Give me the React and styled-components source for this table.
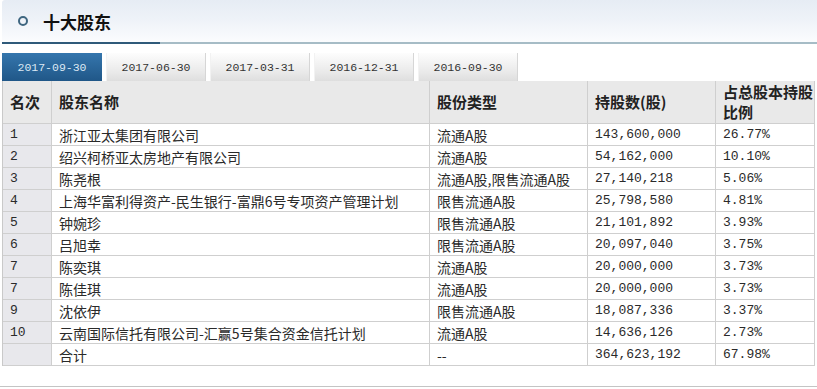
import React from 'react';
import styled, {createGlobalStyle} from 'styled-components';

const Global = createGlobalStyle`
body { margin: 0; background: #fff; font-family: "Noto Sans CJK SC", sans-serif; }
`;

const Page = styled.div`
width: 817px;
height: 389px;
padding-left: 2px;
box-sizing: border-box;
display: flex;
flex-direction: column;
overflow: hidden;
`;

const TitleBar = styled.div`
height: 42px;
display: flex;
align-items: center;
padding-left: 16px;
gap: 15px;
border-top-left-radius: 3px;
background: linear-gradient(#e6ecf4 0%, #eef2f8 45%, #fbfcfe 100%);
`;

const Ring = styled.span`
width: 6px;
height: 6px;
border: 2px solid #3f6680;
border-radius: 50%;
margin-left: 0;
`;

const Title = styled.div`
font-size: 17px;
font-weight: bold;
color: #111;
`;

const Rule = styled.div`
height: 2px;
background: linear-gradient(to right, #2f5a7a 0, #2f5a7a 158px, #a6bcc6 158px);
`;

const Tabs = styled.div`
display: flex;
gap: 4px;
margin-top: 9px;
height: 28px;
`;

const Tab = styled.div`
width: 100px;
display: flex;
align-items: center;
justify-content: center;
font-family: "Liberation Mono", monospace;
font-size: 11.5px;
color: ${p => (p.active ? '#dde9f4' : '#333')};
background: ${p => (p.active
  ? 'linear-gradient(#3576ad, #205788)'
  : 'linear-gradient(#fdfdfd, #e9e9e9 70%, #dedede)')};
box-shadow: ${p => (p.active ? 'none' : 'inset 1px 0 0 #f2f2f2, inset -1px 0 0 #d6d6d6')};
`;

const Table = styled.div`
width: 813px;
border-left: 1px solid #c9c9c9;
display: flex;
flex-direction: column;
`;

const Row = styled.div`
display: grid;
grid-template-columns: 49px 378px 158px 128px 99px;
height: ${p => (p.head ? '43px' : '22px')};
`;

const Cell = styled.div`
box-sizing: border-box;
border-right: 1px solid #cfcfcf;
border-bottom: 1px solid #cfcfcf;
padding-left: ${p => (p.first ? '7px' : '7px')};
display: flex;
align-items: center;
white-space: nowrap;
overflow: hidden;
color: #2a2a2a;
font-size: ${p => (p.mono ? '13px' : '14px')};
font-family: ${p => (p.mono ? '"Liberation Mono", "Noto Sans CJK SC", monospace' : '"Noto Sans CJK SC", sans-serif')};
background: ${p => (p.first ? '#e8e8ec' : '#fff')};
`;

const HeadCell = styled(Cell)`
background: #e9e9e9;
font-family: "Noto Sans CJK SC", sans-serif;
font-size: 15px;
font-weight: bold;
color: #222;
line-height: 20px;
white-space: normal;
`;

const Footer = styled.div`
margin-top: 20px;
height: 1px;
margin-left: -2px;
background: #c4c4c4;
`;

const tabs = ['2017-09-30', '2017-06-30', '2017-03-31', '2016-12-31', '2016-09-30'];

const rows = [
  ['1', '浙江亚太集团有限公司', '流通A股', '143,600,000', '26.77%'],
  ['2', '绍兴柯桥亚太房地产有限公司', '流通A股', '54,162,000', '10.10%'],
  ['3', '陈尧根', '流通A股,限售流通A股', '27,140,218', '5.06%'],
  ['4', '上海华富利得资产-民生银行-富鼎6号专项资产管理计划', '限售流通A股', '25,798,580', '4.81%'],
  ['5', '钟婉珍', '限售流通A股', '21,101,892', '3.93%'],
  ['6', '吕旭幸', '限售流通A股', '20,097,040', '3.75%'],
  ['7', '陈奕琪', '流通A股', '20,000,000', '3.73%'],
  ['7', '陈佳琪', '流通A股', '20,000,000', '3.73%'],
  ['9', '沈依伊', '限售流通A股', '18,087,336', '3.37%'],
  ['10', '云南国际信托有限公司-汇赢5号集合资金信托计划', '流通A股', '14,636,126', '2.73%'],
  ['', '合计', '--', '364,623,192', '67.98%'],
];

export default function App() {
  return (
    <Page>
      <Global />
      <TitleBar>
        <Ring />
        <Title>十大股东</Title>
      </TitleBar>
      <Rule />
      <Tabs>
        {tabs.map((t, i) => <Tab key={t} active={i === 0}>{t}</Tab>)}
      </Tabs>
      <Table>
        <Row head>
          <HeadCell>名次</HeadCell>
          <HeadCell>股东名称</HeadCell>
          <HeadCell>股份类型</HeadCell>
          <HeadCell>持股数(股)</HeadCell>
          <HeadCell>占总股本持股<br />比例</HeadCell>
        </Row>
        {rows.map((r, i) => (
          <Row key={i}>
            <Cell first mono>{r[0]}</Cell>
            <Cell>{r[1]}</Cell>
            <Cell>{r[2]}</Cell>
            <Cell mono>{r[3]}</Cell>
            <Cell mono>{r[4]}</Cell>
          </Row>
        ))}
      </Table>
      <Footer />
    </Page>
  );
}
